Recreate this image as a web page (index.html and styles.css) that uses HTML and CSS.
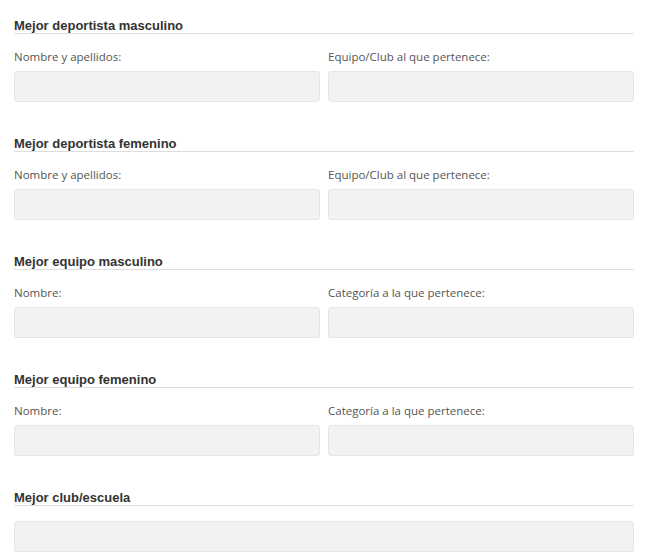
FILE: index.html
```html
<!DOCTYPE html>
<html lang="es">
<head>
<meta charset="utf-8">
<title>Formulario</title>
<link rel="stylesheet" href="styles.css">
</head>
<body>
<form class="form">
  <section class="section">
    <h3 class="section-title">Mejor deportista masculino</h3>
    <div class="row">
      <div class="field">
        <label class="label">Nombre y apellidos:</label>
        <input class="input" type="text">
      </div>
      <div class="field">
        <label class="label">Equipo/Club al que pertenece:</label>
        <input class="input" type="text">
      </div>
    </div>
  </section>
  <section class="section">
    <h3 class="section-title">Mejor deportista femenino</h3>
    <div class="row">
      <div class="field">
        <label class="label">Nombre y apellidos:</label>
        <input class="input" type="text">
      </div>
      <div class="field">
        <label class="label">Equipo/Club al que pertenece:</label>
        <input class="input" type="text">
      </div>
    </div>
  </section>
  <section class="section">
    <h3 class="section-title">Mejor equipo masculino</h3>
    <div class="row">
      <div class="field">
        <label class="label">Nombre:</label>
        <input class="input" type="text">
      </div>
      <div class="field">
        <label class="label">Categoría a la que pertenece:</label>
        <input class="input" type="text">
      </div>
    </div>
  </section>
  <section class="section">
    <h3 class="section-title">Mejor equipo femenino</h3>
    <div class="row">
      <div class="field">
        <label class="label">Nombre:</label>
        <input class="input" type="text">
      </div>
      <div class="field">
        <label class="label">Categoría a la que pertenece:</label>
        <input class="input" type="text">
      </div>
    </div>
  </section>
  <section class="section">
    <h3 class="section-title">Mejor club/escuela</h3>
    <div class="field">
      <input class="input" type="text">
    </div>
  </section>
</form>
</body>
</html>
```
FILE: styles.css
```css
html, body {
  margin: 0;
  padding: 0;
  background: #ffffff;
}

.form {
  padding: 19px 14px 0 14px;
  display: flex;
  flex-direction: column;
  gap: 35px;
}

.section {
  display: flex;
  flex-direction: column;
}

.section-title {
  margin: 0 0 15px 0;
  font-family: "Liberation Sans", Arial, sans-serif;
  font-size: 13px;
  font-weight: bold;
  line-height: 14px;
  color: #333333;
  border-bottom: 1px solid #dddddd;
}

.row {
  display: grid;
  grid-template-columns: 1fr 1fr;
  column-gap: 8px;
}

.field {
  display: flex;
  flex-direction: column;
}

.label {
  font-family: "Open Sans", sans-serif;
  font-size: 11.5px;
  line-height: 15px;
  color: #555555;
  margin-bottom: 7px;
}

.input {
  box-sizing: border-box;
  height: 31px;
  width: 100%;
  margin: 0;
  padding: 0 8px;
  background: #f2f2f2;
  border: 1px solid #e6e6e6;
  border-radius: 3px;
  outline: none;
}
```
